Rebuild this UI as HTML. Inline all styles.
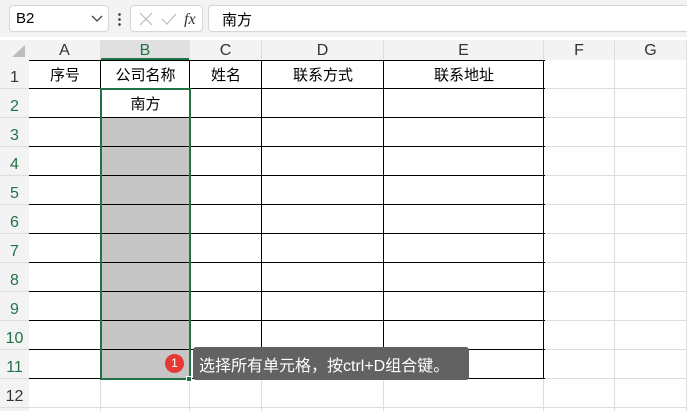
<!DOCTYPE html><html><head><meta charset="utf-8"><style>
body{margin:0;width:687px;height:411px;overflow:hidden;background:#fff;font-family:"Liberation Sans","Noto Sans CJK SC",sans-serif;position:relative}
.a{position:absolute;box-sizing:border-box}
.t{font-size:15px;color:#000;text-align:center}
</style></head><body>
<div class="a" style="left:0;top:0;width:687px;height:37px;background:#f3f3f3"></div>
<div class="a" style="left:9px;top:5px;width:100px;height:27px;background:#fff;border:1px solid #d6d6d6;border-radius:4px;font-size:15px;padding:4px 0 0 6px">B2</div>
<svg class="a" style="left:91px;top:15px" width="12" height="8"><path d="M1 1L6 6L11 1" stroke="#444" fill="none" stroke-width="1.3"/></svg>
<div class="a" style="left:118px;top:12px;width:3px;height:14px;background:radial-gradient(circle,#444 1.2px,transparent 1.5px) 0 0/3px 5px"></div>
<div class="a" style="left:130px;top:5px;width:73px;height:27px;background:#fff;border:1px solid #d6d6d6;border-radius:4px"></div>
<svg class="a" style="left:138px;top:11px" width="60" height="16"><path d="M2 2L14 14M14 2L2 14" stroke="#bbb" stroke-width="1.2"/><path d="M24 8L29 13L38 3" stroke="#bbb" fill="none" stroke-width="1.2"/><text x="46" y="13" font-family="Liberation Serif" font-style="italic" font-size="16" fill="#333">fx</text></svg>
<div class="a" style="left:208px;top:5px;width:490px;height:27px;background:#fff;border:1px solid #d6d6d6;border-radius:4px;font-size:15px;padding:3px 0 0 13px">南方</div>
<div class="a" style="left:0;top:40px;width:687px;height:20px;background:#f3f3f3"></div>
<div class="a" style="left:0;top:60px;width:29px;height:351px;background:#f3f3f3"></div>
<div class="a" style="left:101px;top:40px;width:89px;height:20px;background:#e0e0e0;border-bottom:2px solid #217346"></div>
<svg class="a" style="left:8px;top:44px" width="18" height="14"><path d="M17 1L17 13L4 13Z" fill="#bdbdbd"/></svg>
<div id="g"></div>
<script>
var cx=[29,101,190,262,384,544,615,687],L="ABCDEFG",h='';
for(var i=0;i<7;i++){h+='<div class="a t" style="left:'+cx[i]+'px;top:41px;width:'+(cx[i+1]-cx[i])+'px;height:19px;font-size:16px;color:'+(i==1?'#217346':'#333')+';border-right:1px solid #ddd;line-height:19px">'+L[i]+'</div>';
h+='<div class="a" style="left:'+(cx[i+1]-1)+'px;top:60px;width:1px;height:351px;background:#ddd"></div>';}
for(var r=0;r<12;r++){var y=60+r*29;h+='<div class="a t" style="left:0;top:'+y+'px;width:29px;height:29px;line-height:36px;font-size:16px;color:'+(r>=1&&r<=10?'#217346':'#333')+'">'+(r+1)+'</div>';
h+='<div class="a" style="left:0;top:'+(y+28)+'px;width:687px;height:1px;background:#ddd"></div>';}
h+='<div class="a" style="left:101px;top:118px;width:89px;height:261px;background:#c6c6c6"></div>';
for(var r=0;r<=11;r++)h+='<div class="a" style="left:29px;top:'+(60+r*29-(r?1:0))+'px;width:516px;height:1px;background:#000"></div>';
for(var i=1;i<6;i++)h+='<div class="a" style="left:'+(cx[i]-1)+'px;top:60px;width:1px;height:319px;background:#000"></div>';
var hd=['序号','公司名称','姓名','联系方式','联系地址'];
for(var i=0;i<5;i++)h+='<div class="a t" style="left:'+cx[i]+'px;top:60px;width:'+(cx[i+1]-cx[i])+'px;line-height:32px">'+hd[i]+'</div>';
h+='<div class="a t" style="left:101px;top:89px;width:89px;line-height:32px">南方</div>';
document.getElementById('g').innerHTML=h;
</script>
<div class="a" style="left:100px;top:88px;width:91px;height:292px;border:2px solid #217346"></div>
<div class="a" style="left:186px;top:376px;width:6px;height:6px;background:#217346;border:1px solid #fff"></div>
<div class="a" style="left:193px;top:347px;width:276px;height:33px;background:#626262;border-radius:3px;color:#fff;font-size:16px;padding:5px 0 0 6px;white-space:nowrap">选择所有单元格，按ctrl+D组合键。</div>
<div class="a" style="left:188px;top:359px;width:0;height:0;border:5px solid transparent;border-right-color:#626262"></div>
<div class="a" style="left:165px;top:354px;width:19px;height:19px;border-radius:50%;background:#e53935;color:#fff;font-size:12px;text-align:center;line-height:19px">1</div>
</body></html>
